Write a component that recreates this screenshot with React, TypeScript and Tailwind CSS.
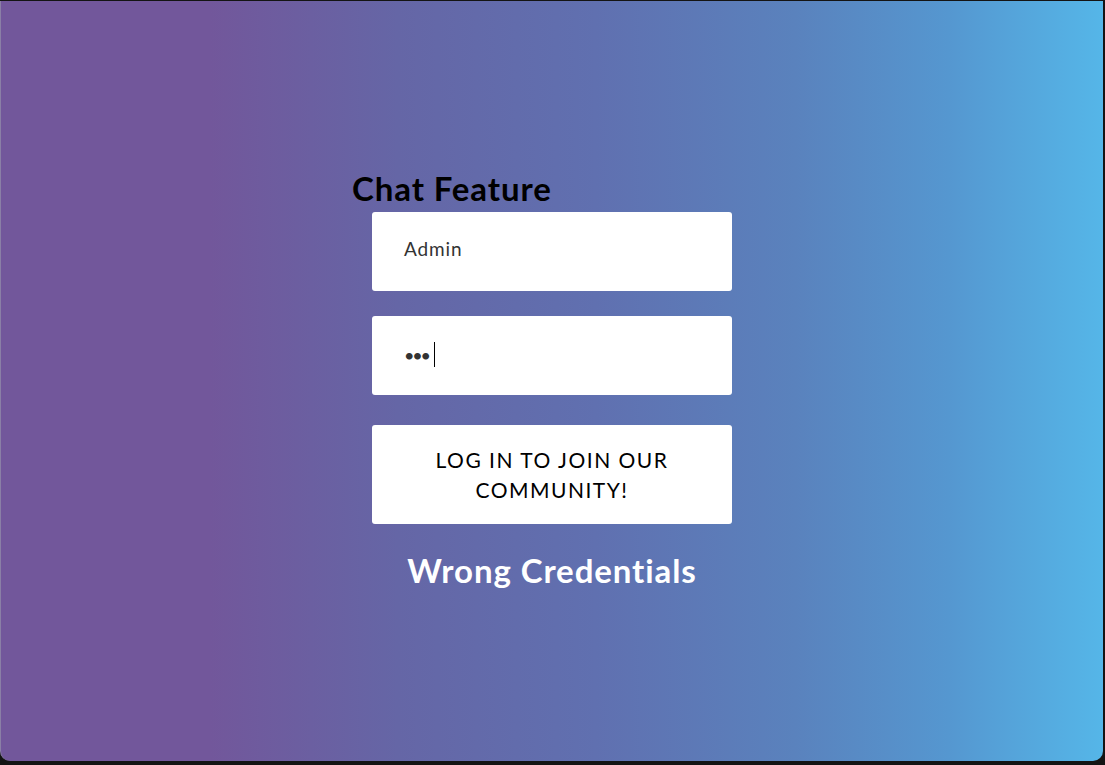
export default function App() {
  return (
    <div className="h-[765px] w-full overflow-hidden bg-[#141414] pt-px font-['Lato',sans-serif]">
      <div className="flex h-[760px] w-[1103px] flex-col items-center rounded-b-[10px] border-l border-[#8a7fa6] bg-[linear-gradient(90deg,#72579b_0%,#72579b_19%,#6566a6_36%,#6070b0_54%,#5a82bd_72%,#5597d0_86%,#55b6e8_100%)] pt-[167px]">
        <div className="flex w-[360px] flex-col">
          <h1 className="-ml-5 mb-[4px] text-[33px] font-bold leading-[40px] tracking-[0.9px] text-black">Chat Feature</h1>

          <div className="flex h-[79px] items-center rounded-[3px] bg-white pb-1 pl-8 text-[19px] tracking-[0.9px] text-[#333]">
            Admin
          </div>

          <div className="mt-[25px] flex h-[79px] items-center rounded-[3px] bg-white pb-0.5 pl-8">
            <span className="text-[18px] leading-none tracking-[-2.2px] text-[#333]">•••</span>
            <span className="ml-[5px] h-[25px] w-px bg-black" />
          </div>

          <button className="mt-[30px] flex h-[99px] items-center justify-center rounded-[3px] bg-white px-[50px] text-center text-[21px] leading-[30px] tracking-[1.5px] text-black">
            LOG IN TO JOIN OUR COMMUNITY!
          </button>

          <p className="mt-[26px] text-center text-[33px] font-bold leading-[40px] tracking-[0.9px] text-white">Wrong Credentials</p>
        </div>
      </div>
    </div>
  );
}
